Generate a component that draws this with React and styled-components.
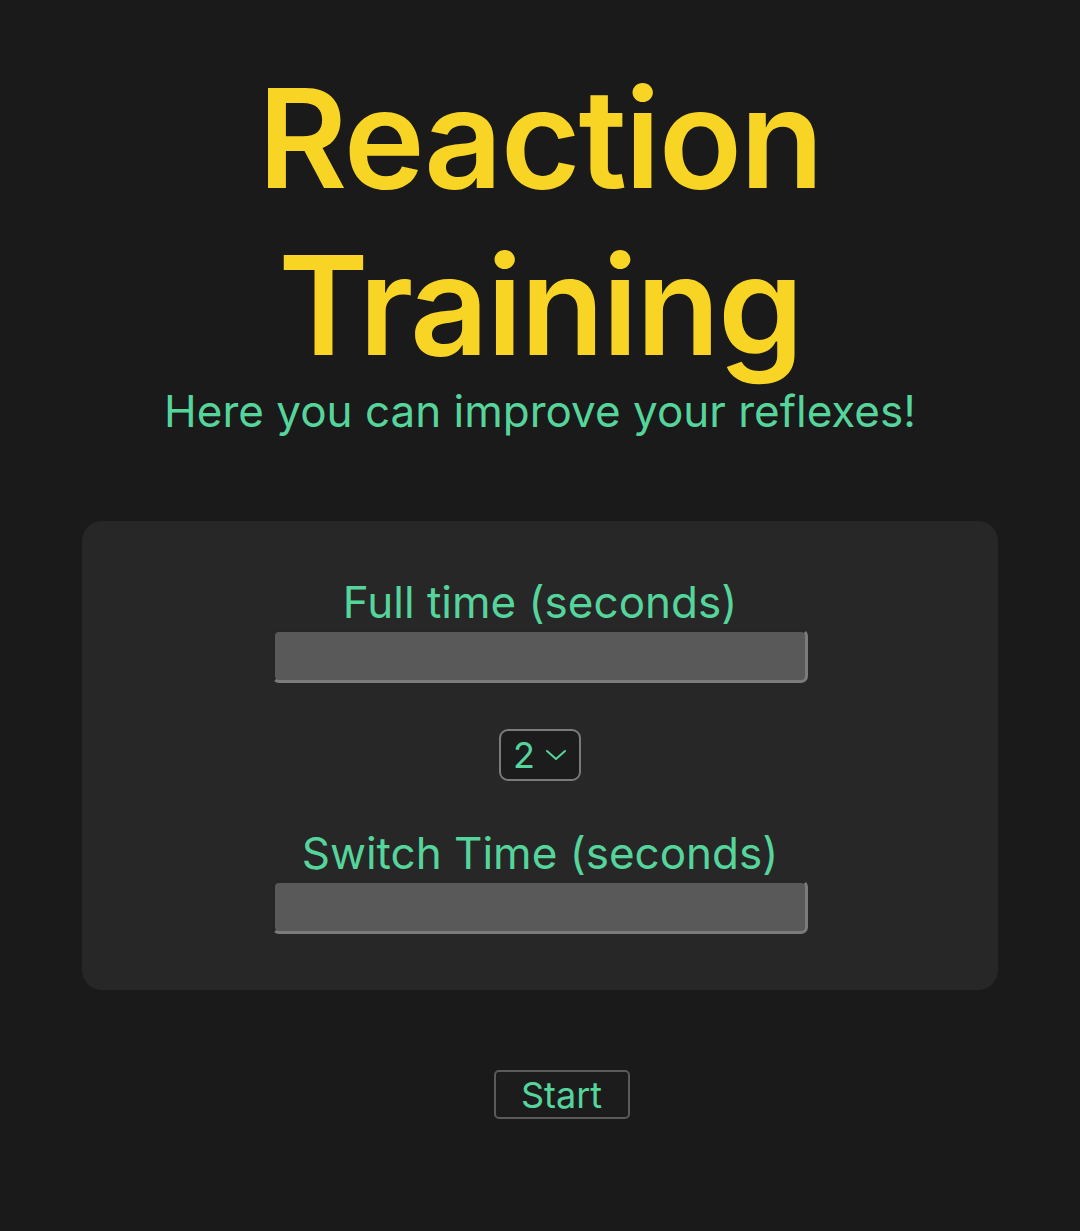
import styled, { createGlobalStyle } from "styled-components";

const GlobalStyle = createGlobalStyle`
  html, body {
    margin: 0;
    padding: 0;
    background: #1a1a1a;
  }
  body {
    font-family: Inter, "Noto Sans", sans-serif;
  }
`;

const Page = styled.div`
  width: 1080px;
  min-height: 1231px;
  display: flex;
  flex-direction: column;
  align-items: center;
  background: #1a1a1a;
`;

const Title = styled.h1`
  margin: 55px 0 0;
  font-size: 137px;
  font-weight: 600;
  line-height: 167px;
  letter-spacing: -2px;
  color: #f8d424;
  text-align: center;
  width: 640px;
`;

const Subtitle = styled.p`
  margin: -6px 0 0;
  font-size: 44px;
  line-height: 56px;
  color: #55d49b;
`;

const Panel = styled.div`
  margin-top: 82px;
  width: 916px;
  height: 469px;
  box-sizing: border-box;
  padding-top: 54px;
  background: #272727;
  border-radius: 20px;
  display: flex;
  flex-direction: column;
  align-items: center;
`;

const Label = styled.label`
  font-size: 44px;
  line-height: 54px;
  color: #55d49b;
  margin-top: ${(p) => p.$top || 0}px;
`;

const Input = styled.input`
  width: 536px;
  height: 54px;
  box-sizing: border-box;
  background: #595959;
  border: 3px solid;
  border-color: #262626 #7b7b7b #7b7b7b #262626;
  border-radius: 7px;
  outline: none;
`;

const SelectBox = styled.div`
  margin-top: 46px;
  width: 82px;
  height: 52px;
  box-sizing: border-box;
  border: 2px solid #7a7a7a;
  border-radius: 9px;
  background: #1c1c1c;
  display: flex;
  align-items: center;
  justify-content: center;
  gap: 10px;
  color: #55d49b;
  font-size: 36px;
`;

const StartButton = styled.button`
  margin: 80px 0 0 43px;
  width: 136px;
  height: 49px;
  box-sizing: border-box;
  background: #1c1c1c;
  border: 2px solid #5a5a5a;
  border-radius: 5px;
  color: #55d49b;
  font-family: Inter, sans-serif;
  font-size: 36px;
  line-height: 1;
  padding: 0;
`;

export default function App() {
  return (
    <>
      <GlobalStyle />
      <Page>
        <Title>Reaction Training</Title>
        <Subtitle>Here you can improve your reflexes!</Subtitle>
        <Panel>
          <Label>Full time (seconds)</Label>
          <Input type="text" />
          <SelectBox>
            <span>2</span>
            <svg width="22" height="14" viewBox="0 0 22 14" fill="none">
              <path d="M2 3l9 8 9-8" stroke="#55d49b" strokeWidth="2" strokeLinecap="round" strokeLinejoin="round" />
            </svg>
          </SelectBox>
          <Label $top={45}>Switch Time (seconds)</Label>
          <Input type="text" />
        </Panel>
        <StartButton>Start</StartButton>
      </Page>
    </>
  );
}
